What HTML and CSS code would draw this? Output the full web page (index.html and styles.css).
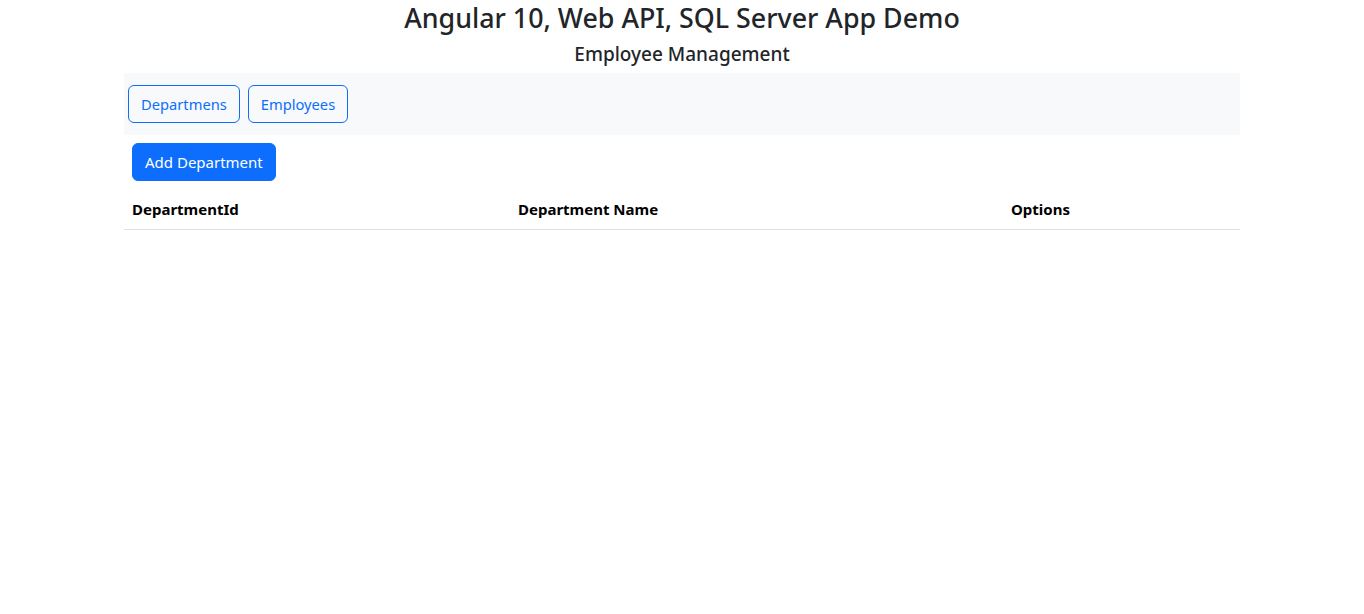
FILE: index.html
```html
<!DOCTYPE html>
<html lang="en">
<head>
<meta charset="utf-8">
<title>Angular 10 App Demo</title>
<link rel="stylesheet" href="styles.css">
</head>
<body>
  <h3 class="title">Angular 10, Web API, SQL Server App Demo</h3>
  <h5 class="subtitle">Employee Management</h5>
  <div class="container">
    <nav class="navbar">
      <button class="btn btn-outline">Departmens</button>
      <button class="btn btn-outline">Employees</button>
    </nav>
    <button class="btn btn-primary add-btn">Add Department</button>
    <table class="table">
      <thead>
        <tr>
          <th class="col-id">DepartmentId</th>
          <th class="col-name">Department Name</th>
          <th class="col-opt">Options</th>
        </tr>
      </thead>
      <tbody></tbody>
    </table>
  </div>
</body>
</html>
```
FILE: styles.css
```css
* { box-sizing: border-box; }
body {
  margin: 0;
  font-family: "Noto Sans", "Open Sans", sans-serif;
  font-size: 15px;
  line-height: 24px;
  color: #212529;
  background: #fff;
}
.title {
  margin: 0 0 8px;
  padding-top: 1px;
  text-align: center;
  font-size: 26.8px;
  font-weight: 500;
  line-height: 33px;
}
.subtitle {
  margin: 0 0 7px;
  text-align: center;
  font-size: 19px;
  font-weight: 500;
  line-height: 24px;
}
.container {
  width: 1140px;
  margin: 0 auto;
  padding: 0 12px;
}
.navbar {
  display: flex;
  gap: 8px;
  padding: 12px 4px;
  background: #f8f9fa;
}
.btn {
  font-family: inherit;
  font-size: 15px;
  line-height: 24px;
  padding: 6px 12px;
  border-radius: 6px;
  border: 1px solid #0d6efd;
  cursor: pointer;
}
.btn-outline {
  font-size: 14.7px;
  background: transparent;
  color: #0d6efd;
}
.btn-primary {
  background: #0d6efd;
  color: #fff;
}
.add-btn {
  display: block;
  margin: 8px;
}
.table {
  width: 100%;
  border-collapse: collapse;
  table-layout: fixed;
  color: #000;
}
.table th {
  text-align: left;
  font-weight: 700;
  font-size: 15px;
  padding: 8px;
  border-bottom: 1px solid #dee2e6;
}
.col-id { width: 386px; }
.col-name { width: 493px; }
.col-opt { width: 237px; }
```
